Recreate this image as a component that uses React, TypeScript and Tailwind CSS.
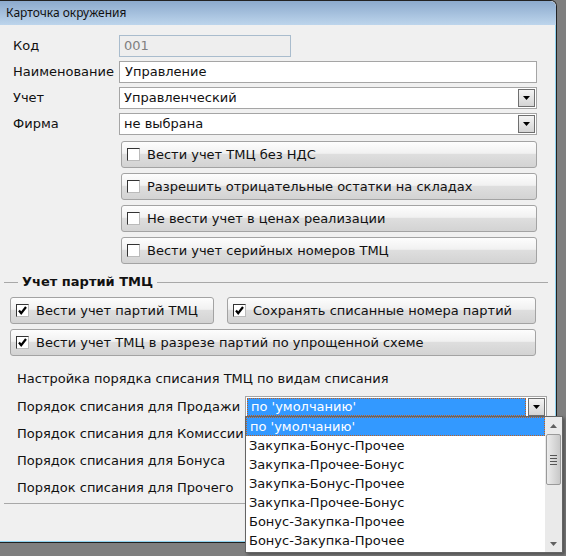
const font = "font-['DejaVu_Sans',_sans-serif]";

function DropButton() {
  return (
    <div className="flex h-[18px] w-[17px] items-center justify-center border border-[#6f6f6f] bg-gradient-to-b from-[#f4f4f4] to-[#d4d4d4]">
      <svg width="7" height="4" viewBox="0 0 7 4">
        <path d="M0 0h7L3.5 4z" fill="#000" />
      </svg>
    </div>
  );
}

function CheckBox({ checked }: { checked?: boolean }) {
  return (
    <div className="flex h-[13px] w-[13px] shrink-0 items-center justify-center border-t border-l border-t-[#333] border-l-[#333] border-r border-b border-r-[#bbb] border-b-[#bbb] bg-white">
      {checked && (
        <svg width="9" height="9" viewBox="0 0 9 9">
          <path d="M1 4.5l2.2 2.7L8 1" stroke="#000" strokeWidth="2.2" fill="none" />
        </svg>
      )}
    </div>
  );
}

function CheckButton({ label, checked, className }: { label: string; checked?: boolean; className: string }) {
  return (
    <div
      className={`flex h-[27px] items-center gap-[7px] rounded-[3px] border border-[#a3a3a3] bg-[linear-gradient(#fdfdfd_0%,#f1f1f1_45%,#dedede_50%,#d3d3d3_100%)] pl-[5px] text-[13px] text-[#111] ${className}`}
    >
      <CheckBox checked={checked} />
      <span>{label}</span>
    </div>
  );
}

function FormRow({ label, children }: { label: string; children: React.ReactNode }) {
  return (
    <div className="flex h-[22px] items-center">
      <div className="w-[119px] shrink-0 pl-[13px]">{label}</div>
      {children}
    </div>
  );
}

function SelectBox({ value }: { value: string }) {
  return (
    <div className="flex h-[22px] w-[418px] items-center justify-between border border-[#a5a5a5] bg-white pl-[4px] pr-[1px]">
      <span>{value}</span>
      <DropButton />
    </div>
  );
}

const options = [
  "по 'умолчанию'",
  "Закупка-Бонус-Прочее",
  "Закупка-Прочее-Бонус",
  "Закупка-Бонус-Прочее",
  "Закупка-Прочее-Бонус",
  "Бонус-Закупка-Прочее",
  "Бонус-Закупка-Прочее",
];

export default function App() {
  return (
    <div className={`relative h-[556px] w-[566px] overflow-hidden bg-[#7f7f7f] ${font} text-[13px] text-[#111]`}>
      <div className="flex h-[543px] w-[557px] flex-col rounded-tr-[6px] border-t border-r border-b border-[#222] bg-[#f0f0f0]">
        <div className="flex h-[24px] items-center rounded-tr-[6px] bg-gradient-to-b from-[#8caacd] to-[#bdd5ec] pl-[6px] font-['Noto_Sans',_sans-serif] text-[12px] text-[#111]">
          Карточка окружения
        </div>
        <div className="flex flex-1 flex-col border-r border-b border-[#8fd3f0]">
          <div className="flex flex-col gap-[4px] pt-[10px]">
            <FormRow label="Код">
              <div className="flex h-[22px] w-[172px] items-center border border-[#a9bccd] bg-[#eeeeee] pl-[4px] text-[#808080]">
                001
              </div>
            </FormRow>
            <FormRow label="Наименование">
              <div className="flex h-[22px] w-[418px] items-center border border-[#a5a5a5] bg-white pl-[5px]">
                Управление
              </div>
            </FormRow>
            <FormRow label="Учет">
              <SelectBox value="Управленческий" />
            </FormRow>
            <FormRow label="Фирма">
              <SelectBox value="не выбрана" />
            </FormRow>
          </div>

          <div className="mt-[6px] flex flex-col gap-[5px] pl-[121px]">
            <CheckButton className="w-[416px]" label="Вести учет ТМЦ без НДС" />
            <CheckButton className="w-[416px]" label="Разрешить отрицательные остатки на складах" />
            <CheckButton className="w-[416px]" label="Не вести учет в ценах реализации" />
            <CheckButton className="w-[416px]" label="Вести учет серийных номеров ТМЦ" />
          </div>

          <div className="mt-[10px] flex h-[16px] items-center pl-[4px] pr-[7px]">
            <div className="h-px w-[14px] bg-[#a8a8a8]" />
            <div className="px-[4px] font-bold">Учет партий ТМЦ</div>
            <div className="h-px flex-1 bg-[#a8a8a8]" />
          </div>

          <div className="mt-[7px] flex flex-col gap-[5px] pl-[10px]">
            <div className="flex gap-[13px]">
              <CheckButton className="w-[204px]" label="Вести учет партий ТМЦ" checked />
              <CheckButton className="w-[309px]" label="Сохранять списанные номера партий" checked />
            </div>
            <CheckButton className="w-[526px]" label="Вести учет ТМЦ в разрезе партий по упрощенной схеме" checked />
          </div>

          <div className="mt-[13px] pl-[17px]">Настройка порядка списания ТМЦ по видам списания</div>

          <div className="mt-[7px] flex h-[22px] items-center pl-[17px]">
            <div className="w-[228px]">Порядок списания для Продажи</div>
            <div className="flex h-[22px] w-[302px] items-center justify-between border border-[#a5a5a5] bg-white p-[1px]">
              <div className="flex h-full flex-1 items-center border border-dotted border-[#c06020] bg-[#3399ff] pl-[3px] text-white">
                по 'умолчанию'
              </div>
              <div className="ml-[2px]">
                <DropButton />
              </div>
            </div>
          </div>
          <div className="mt-[5px] flex h-[22px] items-center pl-[17px]">Порядок списания для Комиссии</div>
          <div className="mt-[5px] flex h-[22px] items-center pl-[17px]">Порядок списания для Бонуса</div>
          <div className="mt-[5px] flex h-[22px] items-center pl-[17px]">Порядок списания для Прочего</div>

          <div className="mt-[4px] ml-[4px] h-px bg-[#a8a8a8]" />
        </div>
      </div>

      <div className="absolute top-[416px] left-[245px] flex h-[137px] w-[318px] border border-[#646464] bg-white shadow-[2px_2px_3px_rgba(0,0,0,0.35)]">
        <div className="flex flex-1 flex-col">
          {options.map((o, i) => (
            <div
              key={i}
              className={`flex h-[19px] items-center pl-[3px] ${
                i === 0 ? "border border-dotted border-[#c06020] bg-[#3399ff] text-white" : ""
              }`}
            >
              {o}
            </div>
          ))}
        </div>
        <div className="flex w-[17px] flex-col items-center bg-[#eaeaea]">
          <div className="flex h-[17px] items-center justify-center">
            <svg width="7" height="4" viewBox="0 0 7 4">
              <path d="M3.5 0L7 4H0z" fill="#606060" />
            </svg>
          </div>
          <div className="flex h-[51px] w-[15px] items-center justify-center rounded-[2px] border border-[#9a9a9a] bg-gradient-to-r from-[#ececec] via-[#dadada] to-[#c8c8c8]">
            <div className="flex flex-col gap-[2px]">
              <div className="h-px w-[7px] bg-[#555]" />
              <div className="h-px w-[7px] bg-[#555]" />
              <div className="h-px w-[7px] bg-[#555]" />
              <div className="h-px w-[7px] bg-[#555]" />
            </div>
          </div>
          <div className="flex-1" />
          <div className="flex h-[17px] items-center justify-center">
            <svg width="7" height="4" viewBox="0 0 7 4">
              <path d="M0 0h7L3.5 4z" fill="#606060" />
            </svg>
          </div>
        </div>
      </div>
    </div>
  );
}
